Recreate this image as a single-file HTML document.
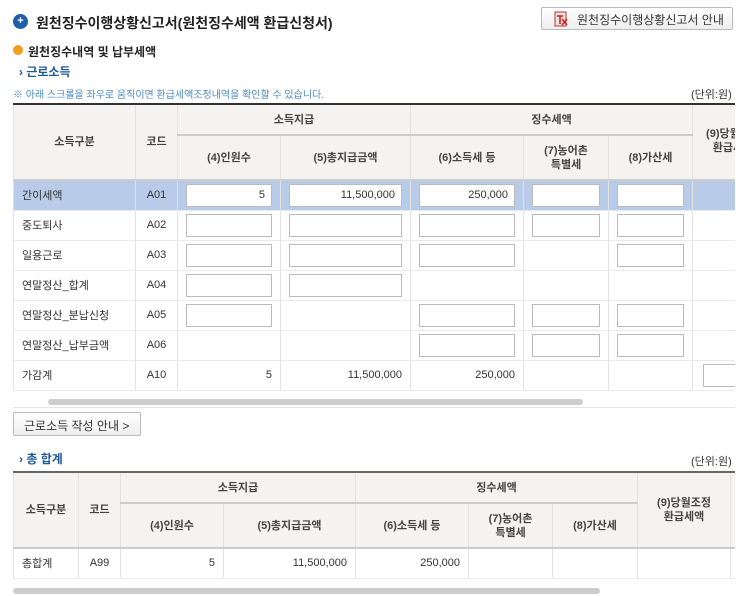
<!DOCTYPE html>
<html><head><meta charset="utf-8"><style>
*{box-sizing:border-box;margin:0;padding:0}
body{width:750px;height:596px;background:#fff;font-family:"Liberation Sans","Noto Sans CJK KR",sans-serif;font-size:11px;color:#333;position:relative;overflow:hidden}
.a{position:absolute}
.wrap{position:absolute;left:13px;overflow:hidden}
table{border-collapse:collapse;table-layout:fixed}
td,th{border:1px solid #e2e2e2;border-top:none;border-bottom:1px solid #eaeaea;height:30px;font-weight:normal;white-space:nowrap}
th{background:#f4f3f1;font-weight:bold;color:#444;font-size:11px;line-height:14px;border-bottom:2px solid #ccc}
td{padding:0 8px}
td.c{text-align:center}
td.r{text-align:right}
tr.sel td{background:#b8cbe8}
.in{display:block;height:23px;border:1px solid #bbb;background:#fff;text-align:right;padding:4px 6px 0 0;font-size:11px}
.sb{position:absolute;height:6px;border-radius:3px;background:#cdcdcd}
.btn{position:absolute;border:1px solid #bbb;background:linear-gradient(#fff,#eee);border-radius:2px;font-size:12px;color:#333}
</style></head><body>
<div class="a" style="left:13px;top:14px;width:15px;height:15px;border-radius:50%;background:#1f5ea8;color:#fff;font-size:11px;line-height:15px;text-align:center;font-weight:bold">+</div>
<div class="a" style="left:36px;top:13px;font-size:14px;font-weight:bold;color:#222">원천징수이행상황신고서(원천징수세액 환급신청서)</div>
<div class="btn" style="left:541px;top:7px;width:192px;height:23px">
<svg class="a" style="left:12px;top:3px" width="16" height="16" viewBox="0 0 16 16"><rect x="1" y="1" width="11" height="14" fill="#e8e2df" stroke="#b33" stroke-width="1"/><path d="M3 5h6M6 5v8M8 8l5 6M13 8l-5 6" stroke="#c22" stroke-width="1.6" fill="none"/></svg>
<span class="a" style="left:35px;top:3px">원천징수이행상황신고서 안내</span></div>
<div class="a" style="left:13px;top:45px;width:10px;height:10px;border-radius:50%;background:#f0a020"></div>
<div class="a" style="left:28px;top:43px;font-size:12px;font-weight:bold;color:#222">원천징수내역 및 납부세액</div>
<div class="a" style="left:19px;top:63px;font-size:12px;font-weight:bold;color:#1d5a9c">› 근로소득</div>
<div class="a" style="left:13px;top:86px;font-size:10px;color:#4a8ac4">※ 아래 스크롤을 좌우로 움직이면 환급세액조정내역을 확인할 수 있습니다.</div>
<div class="a" style="left:691px;top:86px;font-size:11px;color:#333">(단위:원)</div>

<div class="wrap" style="top:103px;width:722px;height:305px;border-top:2px solid #333">
<table style="width:760px">
<col style="width:122px"><col style="width:42px"><col style="width:103px"><col style="width:130px"><col style="width:113px"><col style="width:85px"><col style="width:84px"><col style="width:81px">
<tr><th rowspan="2" style="height:75px">소득구분</th><th rowspan="2">코드</th><th colspan="2" style="height:30px">소득지급</th><th colspan="3">징수세액</th><th rowspan="2" style="vertical-align:top;padding-top:22px">(9)당월조정<br>환급세액</th></tr>
<tr><th style="height:45px">(4)인원수</th><th>(5)총지급금액</th><th>(6)소득세 등</th><th>(7)농어촌<br>특별세</th><th>(8)가산세</th></tr>
<tr class="sel"><td>간이세액</td><td class="c">A01</td><td><span class="in">5</span></td><td><span class="in">11,500,000</span></td><td><span class="in">250,000</span></td><td><span class="in"></span></td><td><span class="in"></span></td><td></td></tr>
<tr><td>중도퇴사</td><td class="c">A02</td><td><span class="in"></span></td><td><span class="in"></span></td><td><span class="in"></span></td><td><span class="in"></span></td><td><span class="in"></span></td><td></td></tr>
<tr><td>일용근로</td><td class="c">A03</td><td><span class="in"></span></td><td><span class="in"></span></td><td><span class="in"></span></td><td></td><td><span class="in"></span></td><td></td></tr>
<tr><td>연말정산_합계</td><td class="c">A04</td><td><span class="in"></span></td><td><span class="in"></span></td><td></td><td></td><td></td><td></td></tr>
<tr><td>연말정산_분납신청</td><td class="c">A05</td><td><span class="in"></span></td><td></td><td><span class="in"></span></td><td><span class="in"></span></td><td><span class="in"></span></td><td></td></tr>
<tr><td>연말정산_납부금액</td><td class="c">A06</td><td></td><td></td><td><span class="in"></span></td><td><span class="in"></span></td><td><span class="in"></span></td><td></td></tr>
<tr><td>가감계</td><td class="c">A10</td><td class="r">5</td><td class="r">11,500,000</td><td class="r">250,000</td><td></td><td></td><td style="padding:0 0 0 10px"><span class="in"></span></td></tr>
</table>
<div class="sb" style="left:35px;top:294px;width:535px"></div>
<div class="a" style="left:0;top:302px;width:722px;border-top:1px solid #e6e6e6"></div>
</div>

<div class="btn" style="left:13px;top:412px;width:128px;height:24px"><span class="a" style="left:10px;top:4px">근로소득 작성 안내 &gt;</span></div>
<div class="a" style="left:19px;top:450px;font-size:12px;font-weight:bold;color:#1d5a9c">› 총 합계</div>
<div class="a" style="left:691px;top:453px;font-size:11px;color:#333">(단위:원)</div>

<div class="wrap" style="top:471px;width:722px;height:125px;border-top:2px solid #666">
<table style="width:760px">
<col style="width:65px"><col style="width:42px"><col style="width:103px"><col style="width:132px"><col style="width:113px"><col style="width:84px"><col style="width:85px"><col style="width:93px"><col style="width:43px">
<tr><th rowspan="2" style="height:75px">소득구분</th><th rowspan="2">코드</th><th colspan="2" style="height:30px">소득지급</th><th colspan="3">징수세액</th><th rowspan="2">(9)당월조정<br>환급세액</th><th rowspan="2"></th></tr>
<tr><th style="height:45px">(4)인원수</th><th>(5)총지급금액</th><th>(6)소득세 등</th><th>(7)농어촌<br>특별세</th><th>(8)가산세</th></tr>
<tr><td>총합계</td><td class="c">A99</td><td class="r">5</td><td class="r">11,500,000</td><td class="r">250,000</td><td></td><td></td><td></td><td></td></tr>
</table>
<div class="sb" style="left:0;top:115px;width:587px"></div>
</div>
</body></html>
